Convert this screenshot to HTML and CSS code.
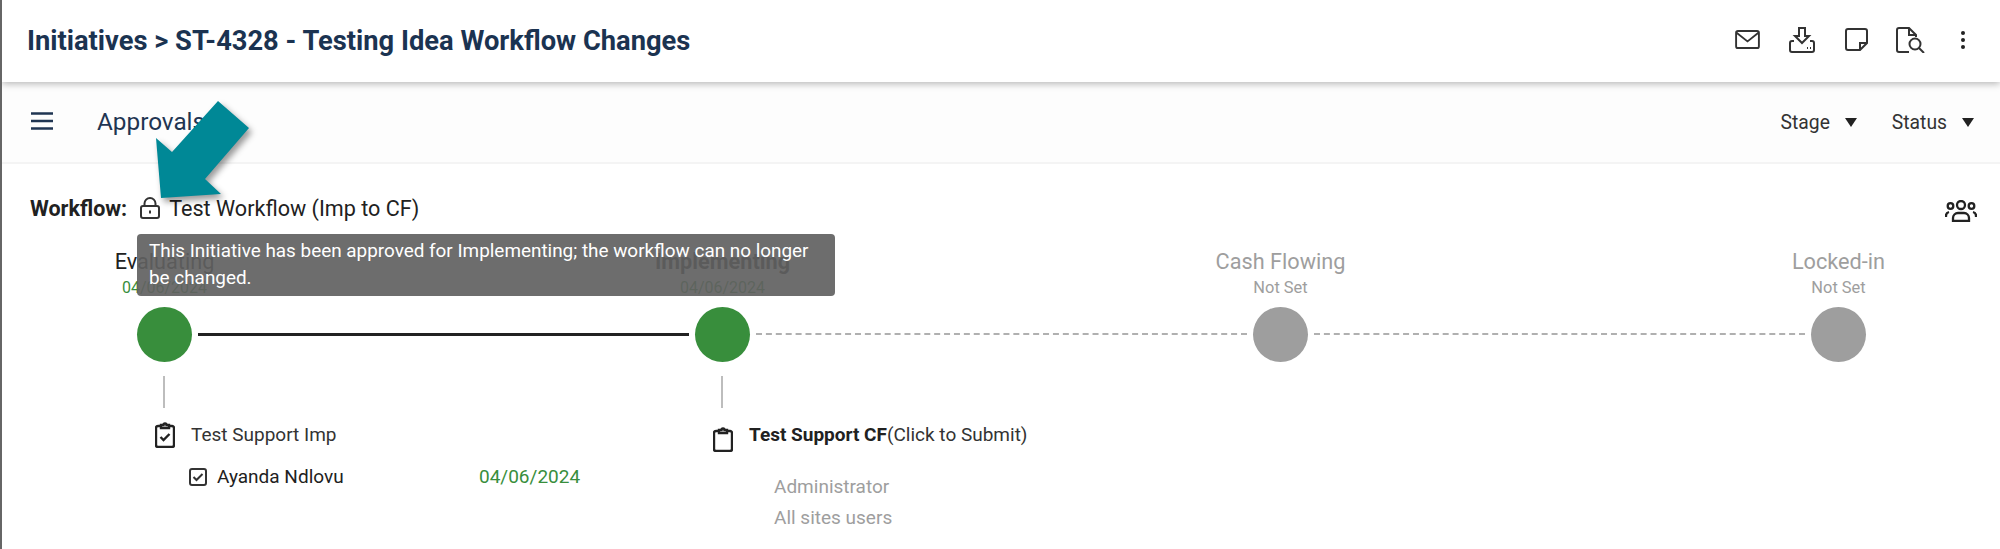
FILE: index.html
```html
<!DOCTYPE html>
<html lang="en">
<head>
  <meta charset="UTF-8" />
  <title>Initiative Approvals</title>
  <link rel="stylesheet" href="styles.css">
</head>
<body>
  <header class="topbar">
    <h1>Initiatives &gt; ST-4328 - Testing Idea Workflow Changes</h1>
    <div class="top-icons">
      <svg class="ic-mail" viewBox="0 0 26 20"><rect x="1" y="1" width="24" height="18" rx="2"/><path d="M1.5 3 13 12 24.500 3"/></svg>
      <svg class="ic-download" viewBox="0 0 26 26"><path d="M10 1h6v8h4l-7 7-7-7h4z"/><path d="M5 14H3a2 2 0 0 0-2 2v7a2 2 0 0 0 2 2h20a2 2 0 0 0 2-2v-7a2 2 0 0 0-2-2h-2"/><path d="M18 21h1M21 21h1"/></svg>
      <svg class="ic-note" viewBox="0 0 23 23"><path d="M15 22H3a2 2 0 0 1-2-2V3a2 2 0 0 1 2-2h17a2 2 0 0 1 2 2v12z"/><path d="M15 22v-7h7"/></svg>
      <svg class="ic-search" viewBox="0 0 29 26"><path d="M13 25H3a2 2 0 0 1-2-2V3a2 2 0 0 1 2-2h10l7 7v2"/><path d="M13 1v7h7"/><circle cx="19" cy="17" r="5.500"/><path d="m23 21 5 5"/></svg>
      <div class="dots"><i></i><i></i><i></i></div>
    </div>
  </header>

  <nav class="subbar">
    <svg class="ic-menu" viewBox="0 0 22 18"><path d="M0 1.500h22M0 9h22M0 16.500h22"/></svg>
    <span class="subbar-title">Approvals</span>
    <div class="filters">
      <span class="filter">Stage<b class="caret"></b></span>
      <span class="filter">Status<b class="caret"></b></span>
    </div>
  </nav>

  <section class="workflow-row">
    <strong>Workflow:</strong>
    <svg class="ic-lock" viewBox="0 0 20 22"><rect x="1" y="9" width="18" height="12" rx="2"/><path d="M4.500 9V6.500a5.500 5.500 0 0 1 11 0V9"/><path d="M10 13.500v3"/></svg>
    <span class="workflow-name">Test Workflow (Imp to CF)</span>
    <svg class="ic-group" viewBox="0 0 32 22"><circle cx="16" cy="5" r="4"/><circle cx="5.500" cy="6" r="2.800"/><circle cx="26.500" cy="6" r="2.800"/><path d="M8 21v-3a5 5 0 0 1 5-5h6a5 5 0 0 1 5 5v3z"/><path d="M1 17v-1a4 4 0 0 1 3-4M31 17v-1a4 4 0 0 0-3-4"/></svg>
  </section>

  <section class="stages">
    <div class="stage">
      <div class="stage-name">Evaluating</div>
      <div class="stage-date done">04/06/2024</div>
      <div class="node green"></div>
    </div>
    <div class="link solid"></div>
    <div class="stage">
      <div class="stage-name strong">Implementing</div>
      <div class="stage-date done">04/06/2024</div>
      <div class="node green"></div>
    </div>
    <div class="link dashed"></div>
    <div class="stage off">
      <div class="stage-name">Cash Flowing</div>
      <div class="stage-date">Not Set</div>
      <div class="node grey"></div>
    </div>
    <div class="link dashed"></div>
    <div class="stage off">
      <div class="stage-name">Locked-in</div>
      <div class="stage-date">Not Set</div>
      <div class="node grey"></div>
    </div>
  </section>

  <section class="tasks">
    <div class="task-col">
      <div class="stem"></div>
      <div class="task-head">
        <svg class="ic-clip" viewBox="0 0 20 26"><path d="M6 4H3a2 2 0 0 0-2 2v17a2 2 0 0 0 2 2h14a2 2 0 0 0 2-2V6a2 2 0 0 0-2-2h-3"/><path d="M6 6V3h2.500a1.500 1.500 0 0 1 3 0H14v3z"/><path d="m5.500 15 3 3 6-6"/></svg>
        <span>Test Support Imp</span>
      </div>
      <div class="approver">
        <svg class="ic-check" viewBox="0 0 18 18"><rect x="1" y="1" width="16" height="16" rx="2"/><path d="m4.500 9 3 3 6-6"/></svg>
        <span class="approver-name">Ayanda Ndlovu</span>
        <span class="approver-date">04/06/2024</span>
      </div>
    </div>
    <div class="task-col">
      <div class="stem"></div>
      <div class="task-head open">
        <svg class="ic-clip" viewBox="0 0 20 25"><path d="M6 4H3a2 2 0 0 0-2 2v16a2 2 0 0 0 2 2h14a2 2 0 0 0 2-2V6a2 2 0 0 0-2-2h-3"/><path d="M6 6V3h2.500a1.500 1.500 0 0 1 3 0H14v3z"/></svg>
        <span><strong>Test Support CF</strong>(Click to Submit)</span>
      </div>
      <ul class="pending">
        <li>Administrator</li>
        <li>All sites users</li>
      </ul>
    </div>
  </section>

  <!-- overlays -->
  <div class="tooltip">This Initiative has been approved for Implementing; the workflow can no longer be changed.</div>
  <svg class="callout" viewBox="0 0 2000 549"><polygon points="161,198 156,138 172,152 218,101 249,128 205,179 221,194"/></svg>
</body>
</html>
```

FILE: styles.css
```css
html, body {
  height: 100%;
}
body {
  margin: 0;
  box-sizing: border-box;
  height: 549px;
  overflow: hidden;
  border-left: 2px solid #666;
  background: white;
  color: #212121;
  font-family: Roboto, Arial, sans-serif;
  font-size: 19px;
}
svg {
  display: block;
  flex: none;
  fill: none;
  stroke: #333;
  stroke-width: 2;
}

/* top bar */
.topbar {
  position: relative;
  display: flex;
  align-items: center;
  justify-content: space-between;
  height: 82px;
  padding-left: 25px;
  background: white;
  box-shadow: 0 2px 7px rgba(0,0,0,0.28);
}
.topbar h1 {
  margin: 0;
  color: #1b3351;
  font-size: 27.300px;
  font-weight: 700;
}
.top-icons {
  display: flex;
  align-items: center;
  padding: 0 35px 3px 0;
}
.ic-mail { width: 25px; height: 19px; margin-right: 29px; }
.ic-download { width: 26px; height: 26px; margin-right: 30px; }
.ic-note { width: 23px; height: 23px; margin-right: 28px; }
.ic-search { width: 29px; height: 26px; margin-right: 36px; }
.dots {
  display: flex;
  flex-direction: column;
  gap: 3px;
}
.dots i {
  width: 4px;
  height: 4px;
  border-radius: 50%;
  background: #222;
}

/* approvals bar */
.subbar {
  display: flex;
  align-items: center;
  height: 82px;
  padding: 0 26px 2px 29px;
  background: #fdfdfd;
  border-bottom: 2px solid #f4f4f4;
  box-sizing: border-box;
}
.ic-menu {
  width: 22px;
  height: 18px;
  stroke: #1f3552;
  stroke-width: 2.600;
}
.subbar-title {
  margin-left: 44px;
  color: #1f3552;
  font-size: 24.300px;
}
.filters {
  display: flex;
  gap: 35px;
  margin: 2px 0 0 auto;
  color: #333;
  font-size: 19.300px;
}
.filter {
  display: flex;
  align-items: center;
  gap: 15px;
}
.caret {
  width: 0;
  height: 0;
  border-left: 6px solid transparent;
  border-right: 6px solid transparent;
  border-top: 9px solid #222;
}

/* workflow line */
.workflow-row {
  display: flex;
  align-items: center;
  height: 80px;
  padding: 4px 23px 0 28px;
}
.workflow-row strong {
  font-size: 21.500px;
  font-weight: 700;
}
.ic-lock { width: 20px; height: 22px; margin-left: 13px; }
.workflow-name {
  margin-left: 9px;
  font-size: 21.600px;
}
.ic-group {
  width: 32px;
  height: 22px;
  margin: 6px 0 0 auto;
  stroke-width: 2.300;
  stroke: #222;
}

/* stage track */
.stages {
  display: flex;
  margin-left: 135px;
}
.stage {
  display: flex;
  flex-direction: column;
  align-items: center;
  width: 55px;
  flex: none;
  white-space: nowrap;
}
.stage-name {
  font-size: 21.700px;
  line-height: 28px;
}
.stage-name.strong {
  font-weight: 700;
}
.stage-date {
  font-size: 16.400px;
  line-height: 24px;
}
.stage-date.done {
  color: #388e3c;
  font-size: 16px;
}
.stage.off {
  color: #9e9e9e;
}
.node {
  width: 55px;
  height: 55px;
  margin-top: 7px;
  border-radius: 50%;
}
.node.green { background: #388e3c; }
.node.grey { background: #9e9e9e; }
.link {
  flex: none;
  width: 491px;
  margin: 85px 6px 0;
}
.link.solid {
  height: 0;
  border-top: 3px solid #222;
}
.link.dashed {
  height: 0;
  border-top: 2px dashed #b0b0b0;
}

/* tasks under the stages */
.tasks {
  display: flex;
  margin-left: 135px;
}
.task-col {
  width: 558px;
}
.stem {
  width: 2px;
  height: 32px;
  margin: 14px 0 14px 26px;
  background: #bdbdbd;
}
.task-head {
  display: flex;
  align-items: flex-start;
  gap: 16px;
  margin-left: 18px;
  color: #333;
  line-height: 26px;
}
.task-head strong {
  color: #212121;
  font-weight: 700;
}
.ic-clip {
  width: 20px;
  height: 26px;
  stroke: #222;
  stroke-width: 2.400;
}
.task-head.open .ic-clip {
  margin-top: 5px;
  height: 25px;
}
.approver {
  display: flex;
  align-items: center;
  margin: 16px 0 0 52px;
  line-height: 26px;
}
.ic-check { width: 18px; height: 18px; }
.approver-name {
  width: 262px;
  margin-left: 10px;
}
.approver-date {
  color: #388e3c;
}
.pending {
  margin: 19px 0 0 79px;
  padding: 0;
  list-style: none;
  color: #9e9e9e;
  line-height: 31px;
}

/* overlays */
.tooltip {
  position: absolute;
  left: 137px;
  top: 234px;
  width: 674px;
  padding: 3px 12px 5px;
  border-radius: 4px;
  background: rgba(97,97,97,0.92);
  color: white;
  font-size: 18.900px;
  line-height: 27px;
}
.callout {
  position: absolute;
  left: 0;
  top: 0;
  width: 2000px;
  height: 549px;
  stroke: none;
  fill: #008896;
  filter: drop-shadow(3px 4px 3px rgba(0,0,0,0.4));
}
```
